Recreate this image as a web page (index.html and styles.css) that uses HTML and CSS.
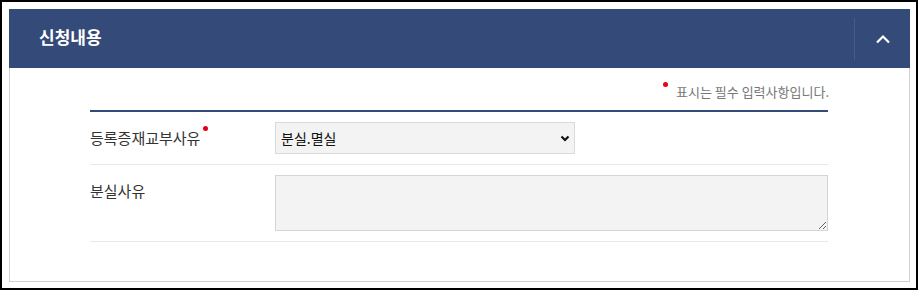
FILE: index.html
```
<!DOCTYPE html>
<html>
<head>
  <meta charset="utf-8">
  <title>신청내용</title>
  <link rel="stylesheet" href="styles.css">
</head>
<body>
  <div class="frame">
    <div class="panel">
      <div class="panel-head">
        <h2 class="panel-title">신청내용</h2>
        <button class="toggle" type="button">
          <svg width="16" height="10" viewBox="0 0 16 10"><path d="M2 8.5 L8 2.5 L14 8.5" fill="none" stroke="#fff" stroke-width="2.2"/></svg>
        </button>
      </div>
      <div class="panel-body">
        <p class="notice"><span class="req"></span>표시는 필수 입력사항입니다.</p>
        <table class="form-table">
          <tr>
            <th>등록증재교부사유<span class="req"></span></th>
            <td>
              <div class="select-wrap">
                <select>
                  <option>분실.멸실</option>
                  <option>훼손</option>
                  <option>기타</option>
                </select>
                <svg class="arrow" width="10" height="7" viewBox="0 0 10 7"><path d="M1.5 1.5 L5 5 L8.5 1.5" fill="none" stroke="#111" stroke-width="2.2"/></svg>
              </div>
            </td>
          </tr>
          <tr>
            <th>분실사유</th>
            <td><textarea></textarea></td>
          </tr>
        </table>
      </div>
    </div>
  </div>
</body>
</html>
```

FILE: styles.css
```
html, body {
  margin: 0;
  padding: 0;
}

body {
  font-family: "Noto Sans CJK KR", "Noto Sans", sans-serif;
  color: #222;
  background: #fff;
}

.frame {
  width: 918px;
  height: 290px;
  box-sizing: border-box;
  border: 2px solid #000;
  padding: 7px 6px 6px 7px;
}

.panel {
  height: 100%;
  box-sizing: border-box;
  border: 1px solid #d2d2d2;
  border-top: 0;
}

.panel-head {
  display: flex;
  align-items: center;
  height: 59px;
  margin: 0 -1px;
  background: #344a78;
}

.panel-title {
  flex: 1;
  margin: 0;
  padding-left: 30px;
  font-size: 17px;
  font-weight: bold;
  color: #fff;
  line-height: 20px;
  margin-top: -4px;
}

.toggle {
  display: flex;
  align-items: center;
  justify-content: center;
  width: 56px;
  height: 42px;
  padding: 0;
  background: none;
  border: 0;
  border-left: 1px solid #475c88;
  cursor: pointer;
}

.panel-body {
  padding: 14px 81px 0 80px;
}

.notice {
  margin: 0 -1px 8px 0;
  text-align: right;
  font-size: 13px;
  line-height: 20px;
  color: #777;
}

.req {
  display: inline-block;
  width: 5px;
  height: 5px;
  border-radius: 50%;
  background: #e60012;
  vertical-align: top;
}

.notice .req {
  margin: 0 8px 0 0;
}

.form-table {
  width: 100%;
  border-collapse: collapse;
  border-top: 2px solid #344a78;
}

.form-table th,
.form-table td {
  border-bottom: 1px solid #e8e8e8;
  padding: 10px 0;
  vertical-align: top;
  text-align: left;
}

.form-table th {
  width: 185px;
  font-size: 15px;
  font-weight: normal;
  color: #333;
  line-height: 32px;
}

.form-table th .req {
  margin: 4px 0 0 3px;
}

.select-wrap {
  position: relative;
  width: 300px;
}

.select-wrap select {
  appearance: none;
  -webkit-appearance: none;
  width: 300px;
  height: 32px;
  padding: 0 0 0 5px;
  background: #f3f3f3;
  border: 1px solid #dadada;
  border-radius: 0;
  font-family: inherit;
  font-size: 14px;
  color: #111;
}

.select-wrap .arrow {
  position: absolute;
  right: 5px;
  top: 13px;
  pointer-events: none;
}

textarea {
  display: block;
  width: 553px;
  height: 56px;
  box-sizing: border-box;
  background: #f3f3f3;
  border: 1px solid #d5d5d5;
  border-radius: 0;
  font-family: inherit;
  resize: vertical;
}
```
